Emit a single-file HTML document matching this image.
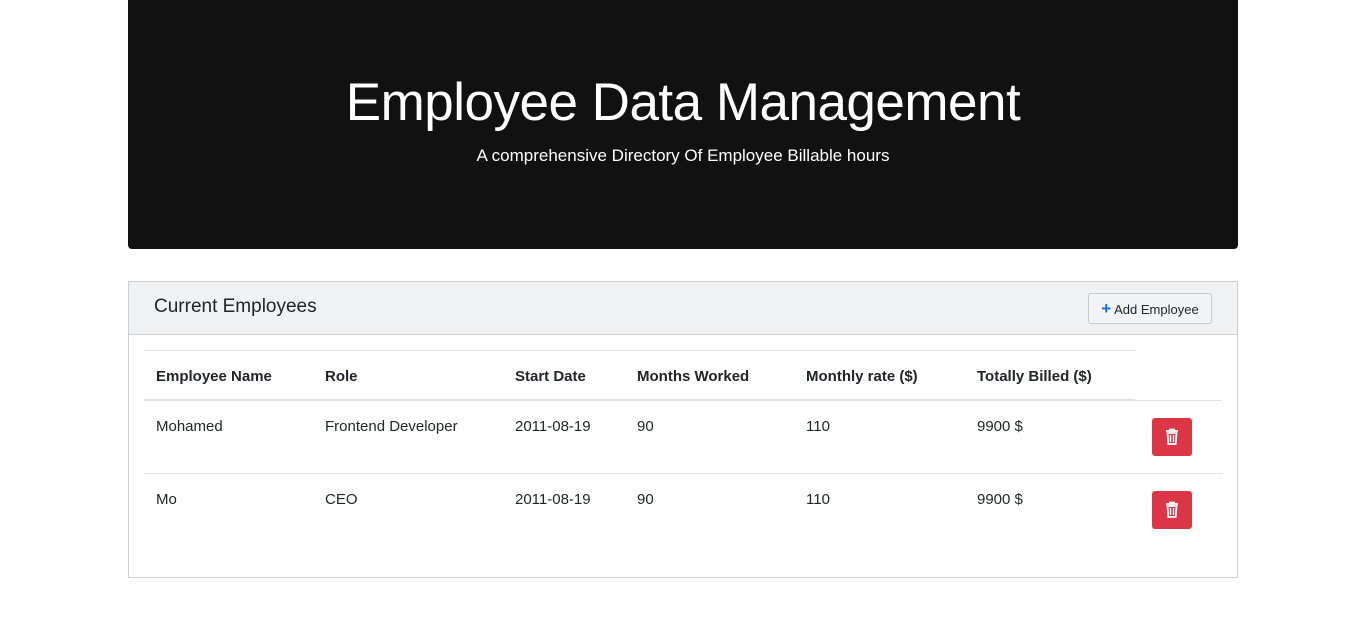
<!DOCTYPE html>
<html><head><style>
body{margin:0;background:#fff;font-family:"Liberation Sans",sans-serif;color:#212529;position:relative;width:1364px;height:623px;overflow:hidden}
.a{position:absolute;white-space:nowrap}
.jumbo{position:absolute;left:128px;top:0;width:1110px;height:249px;background:#111;border-radius:0 0 4px 4px}
.card{position:absolute;left:128px;top:281px;width:1108px;height:295px;border:1px solid #cfcfcf}
.ch{position:absolute;left:0;top:0;width:1108px;height:52px;background:#f0f1f3;border-bottom:1px solid #cfcfcf}
.th{font-weight:bold;font-size:15px;top:368px}
.td{font-size:15px}
.del{position:absolute;left:1152px;width:40px;height:38px;background:#dc3545;border-radius:3px}
.line{position:absolute;left:144px;height:1px;background:#dee2e6}
</style></head><body>
<div class="jumbo"></div>
<div class="a" style="left:0;width:1366px;text-align:center;top:72px;font-size:53px;color:#fff;letter-spacing:-0.5px">Employee Data Management</div>
<div class="a" style="left:0;width:1366px;text-align:center;top:146px;font-size:17px;color:#fff">A comprehensive Directory Of Employee Billable hours</div>
<div class="card"><div class="ch"></div></div>
<div class="a" style="left:154px;top:296px;font-size:19px;color:#212529">Current Employees</div>
<div class="a" style="left:1088px;top:293px;width:122px;height:29px;border:1px solid #c8cacd;border-radius:3px;background:#f3f4f6;font-size:13px;line-height:29px;text-align:center;color:#212529"><span style="color:#0d6efd;font-weight:bold;font-size:17px">+</span> Add Employee</div>
<div class="line" style="top:350px;width:991px"></div>
<div class="line" style="top:399px;width:991px;height:2px"></div>
<div class="line" style="top:400px;width:1078px"></div>
<div class="line" style="top:473px;width:1078px"></div>
<div class="a th" style="left:156px">Employee Name</div>
<div class="a th" style="left:325px">Role</div>
<div class="a th" style="left:515px">Start Date</div>
<div class="a th" style="left:637px">Months Worked</div>
<div class="a th" style="left:806px">Monthly rate ($)</div>
<div class="a th" style="left:977px">Totally Billed ($)</div>
<div class="a td" style="left:156px;top:418px">Mohamed</div>
<div class="a td" style="left:325px;top:418px">Frontend Developer</div>
<div class="a td" style="left:515px;top:418px">2011-08-19</div>
<div class="a td" style="left:637px;top:418px">90</div>
<div class="a td" style="left:806px;top:418px">110</div>
<div class="a td" style="left:977px;top:418px">9900 $</div>
<div class="a td" style="left:156px;top:491px">Mo</div>
<div class="a td" style="left:325px;top:491px">CEO</div>
<div class="a td" style="left:515px;top:491px">2011-08-19</div>
<div class="a td" style="left:637px;top:491px">90</div>
<div class="a td" style="left:806px;top:491px">110</div>
<div class="a td" style="left:977px;top:491px">9900 $</div>
<div class="del" style="top:418px"><svg width="40" height="38" viewBox="0 0 40 38"><path d="M14 13h12M18 13v-1.5h4V13M15.5 15h9l-.8 11h-7.4z" fill="none" stroke="#fff" stroke-width="1.8"/><path d="M18.5 17v7M21.5 17v7" stroke="#fff" stroke-width="1.4"/></svg></div>
<div class="del" style="top:491px"><svg width="40" height="38" viewBox="0 0 40 38"><path d="M14 13h12M18 13v-1.5h4V13M15.5 15h9l-.8 11h-7.4z" fill="none" stroke="#fff" stroke-width="1.8"/><path d="M18.5 17v7M21.5 17v7" stroke="#fff" stroke-width="1.4"/></svg></div>
</body></html>
